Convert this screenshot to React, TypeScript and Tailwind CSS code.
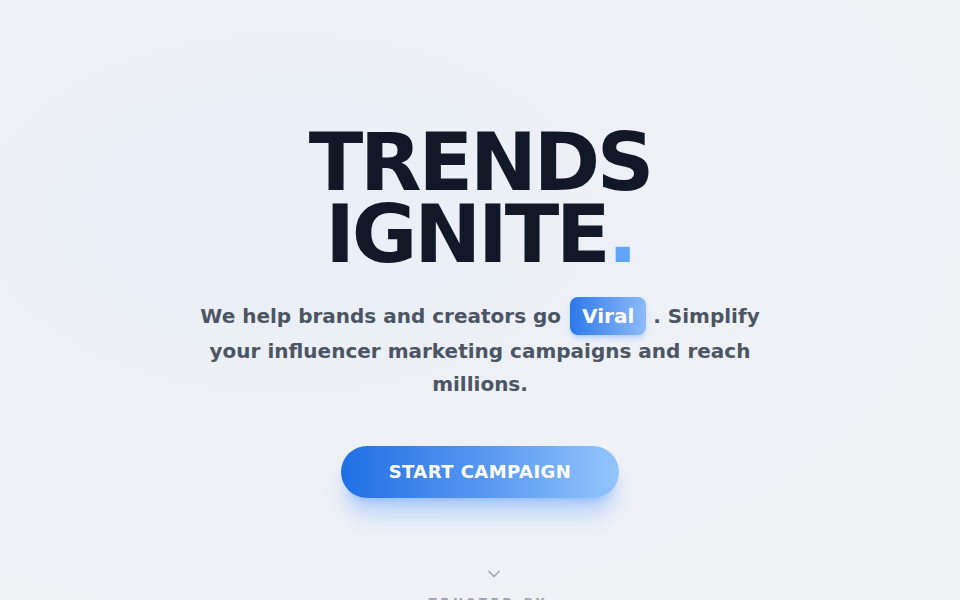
import React from 'react';
import { ChevronDown } from 'lucide-react';

const App: React.FC = () => {
  return (
    <div
      className="min-h-screen w-full overflow-hidden bg-[#eef0f5] bg-[radial-gradient(ellipse_at_30%_35%,#e9eef7_0%,#eef1f6_45%,#f0f1f5_100%)]"
      style={{ fontFamily: '"DejaVu Sans", "Liberation Sans", sans-serif' }}
    >
      <section className="flex flex-col items-center pt-[127px] text-center">
        {/* Headline */}
        <h1 className="text-[80px] font-bold leading-[0.9] tracking-[-0.04em] text-[#111827]">
          TRENDS
          <br />
          IGNITE<span className="text-[#60a5fa]">.</span>
        </h1>

        {/* Subtitle */}
        <p className="mt-[26px] max-w-[576px] text-xl font-bold leading-relaxed text-[#4b5563]">
          We help brands and creators go{' '}
          <span className="ml-0.5 inline-block rounded-lg bg-gradient-to-r from-[#2a78e8] to-[#8dbaf8] px-3 py-1 leading-[1.5] text-white shadow-md shadow-blue-500/25">
            Viral
          </span>{' '}
          . Simplify your influencer marketing campaigns and reach millions.
        </p>

        {/* CTA */}
        <button
          type="button"
          className="mt-[46px] rounded-full bg-gradient-to-r from-[#1f6fe5] via-[#5596f0] to-[#93c5fd] px-12 py-3 text-lg font-bold leading-7 tracking-wide text-white shadow-xl shadow-blue-500/30"
        >
          START CAMPAIGN
        </button>

        {/* Scroll hint */}
        <div className="mt-[66px] flex flex-col items-center pl-6">
          <ChevronDown size={20} strokeWidth={2} className="translate-x-[2px] text-[#a1a8b3]" />
          <span className="mt-[11px] text-xs font-bold tracking-[0.3em] text-[#9ca3af]">TRUSTED BY:</span>
        </div>
      </section>
    </div>
  );
};

export default App;
